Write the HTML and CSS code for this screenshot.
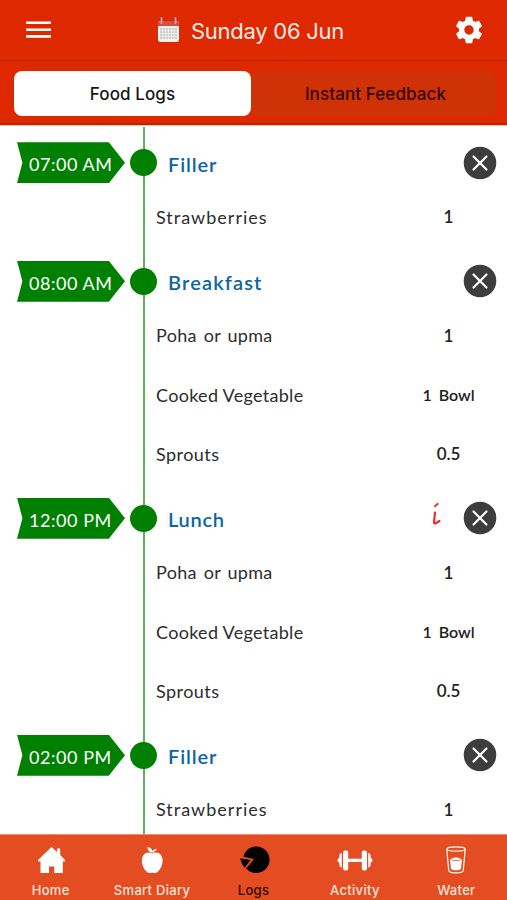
FILE: index.html
```html
<!DOCTYPE html>
<html lang="en">
<head>
    <meta charset="UTF-8">
    <meta name="viewport" content="width=device-width, initial-scale=1.0">
    <title>Food Logs</title>
    <link rel="stylesheet" href="styles.css">
</head>
<body>
    <svg width="0" height="0" class="defs">
        <symbol id="close" viewBox="0 0 34 34">
            <circle cx="17" cy="17" r="16.3" fill="#3d3d3d"/>
            <path d="M10.500 10.500l13 13M23.500 10.500l-13 13" stroke="#fff" stroke-width="2.200" stroke-linecap="round"/>
        </symbol>
    </svg>

    <header class="topbar">
        <button class="icon-btn" aria-label="Menu">
            <svg width="26" height="18" viewBox="0 0 26 18"><path d="M0 1.700h25M0 8.700h25M0 15.400h25" stroke="#fff" stroke-width="2.600"/></svg>
        </button>
        <div class="date">
            <svg width="23" height="26" viewBox="0 0 23 26">
                <rect x="1" y="4" width="21" height="21" rx="2.500" fill="#f4f1ef"/>
                <path d="M1 9V6.500q0-2.500 2.500-2.500h16q2.500 0 2.500 2.500V9z" fill="#dd4a40"/>
                <path d="M3 11h17v11H3z" fill="#c9cdcd"/>
                <path d="M3 13.700h17M3 16.500h17M3 19.300h17M5.800 11v11M8.700 11v11M11.500 11v11M14.400 11v11M17.200 11v11" stroke="#f4f1ef" stroke-width="0.800"/>
                <path d="M4.500 1v5M18.500 1v5" stroke="#a9b5b8" stroke-width="1.800" stroke-linecap="round"/>
            </svg>
            <span>Sunday 06 Jun</span>
        </div>
        <button class="icon-btn" aria-label="Settings">
            <svg width="32" height="32" viewBox="0 0 24 24"><path fill="#fff" d="M19.430 12.980c.04-.32.07-.64.07-.98s-.03-.66-.07-.98l2.110-1.650c.19-.15.24-.42.12-.64l-2-3.460c-.12-.22-.39-.3-.61-.22l-2.490 1c-.52-.4-1.080-.73-1.690-.98l-.38-2.650C14.460 2.180 14.250 2 14 2h-4c-.25 0-.46.18-.49.42l-.38 2.650c-.61.25-1.170.59-1.690.98l-2.490-1c-.23-.09-.49 0-.61.22l-2 3.460c-.13.22-.07.49.12.64l2.110 1.650c-.04.32-.07.65-.07.98s.03.66.07.98l-2.110 1.650c-.19.15-.24.42-.12.64l2 3.460c.12.22.39.3.61.22l2.490-1c.52.4 1.080.73 1.690.98l.38 2.650c.03.24.24.42.49.42h4c.25 0 .46-.18.49-.42l.38-2.650c.61-.25 1.170-.59 1.690-.98l2.490 1c.23.09.49 0 .61-.22l2-3.460c.12-.22.07-.49-.12-.64l-2.110-1.650zM12 15.500c-1.930 0-3.500-1.570-3.500-3.500s1.570-3.500 3.500-3.500 3.500 1.570 3.500 3.500-1.570 3.500-3.500 3.500z"/></svg>
        </button>
    </header>

    <div class="tabs">
        <button class="tab active">Food Logs</button>
        <button class="tab">Instant Feedback</button>
    </div>

    <main class="log">
        <div class="meal">
            <div class="time">07:00 AM</div>
            <div class="dot"></div>
            <h2 class="filler">Filler</h2>
            <svg class="close"><use href="#close"/></svg>
        </div>
        <div class="item"><span class="strawberries">Strawberries</span><span class="qty">1</span></div>

        <div class="meal">
            <div class="time">08:00 AM</div>
            <div class="dot"></div>
            <h2 class="breakfast">Breakfast</h2>
            <svg class="close"><use href="#close"/></svg>
        </div>
        <div class="item"><span class="poha">Poha or upma</span><span class="qty">1</span></div>
        <div class="item"><span class="vegetable">Cooked Vegetable</span><span class="qty bowl">1 Bowl</span></div>
        <div class="item"><span class="sprouts">Sprouts</span><span class="qty">0.5</span></div>

        <div class="meal">
            <div class="time">12:00 PM</div>
            <div class="dot"></div>
            <h2 class="lunch">Lunch</h2>
            <svg class="info" width="12" height="24" viewBox="0 0 12 24" fill="none" stroke="#f12f28" stroke-linecap="round" stroke-linejoin="round"><path d="M4.800 4.300l3-2.500" stroke-width="1.800"/><path d="M5 10.500L4 20q0 1.900 1.700 1.300l3.800-2.300" stroke-width="2.200"/></svg>
            <svg class="close"><use href="#close"/></svg>
        </div>
        <div class="item"><span class="poha">Poha or upma</span><span class="qty">1</span></div>
        <div class="item"><span class="vegetable">Cooked Vegetable</span><span class="qty bowl">1 Bowl</span></div>
        <div class="item"><span class="sprouts">Sprouts</span><span class="qty">0.5</span></div>

        <div class="meal">
            <div class="time">02:00 PM</div>
            <div class="dot"></div>
            <h2 class="filler">Filler</h2>
            <svg class="close"><use href="#close"/></svg>
        </div>
        <div class="item"><span class="strawberries">Strawberries</span><span class="qty">1</span></div>
    </main>

    <nav class="bottom-nav">
        <a class="nav-item">
            <svg width="36" height="30" viewBox="0 0 36 30" fill="#fff"><path d="M18.500 2l5.500 5V3.500h3.200v6.400L32 15v1.500h-2.200V28h-8.600v-6.500H16V28H7.500v-11.500H5V15z"/></svg>
            <span>Home</span>
        </a>
        <a class="nav-item">
            <svg width="36" height="30" viewBox="0 0 36 30" fill="#fff"><path d="M18.500 8.500c3-1.700 6.200-1.200 8.300 1.200 3.300 4 1.800 12.500-2.600 16.600-2 2-3.800 2.200-6 1.300-2.200.9-4 .7-6-1.300-4.400-4.100-5.800-12.600-2.500-16.600 2.200-2.400 5.800-2.900 8.800-1.200z"/><path d="M18.500 7.800c-2.800-.3-5-2.400-5.200-5.700 3.300.1 5.300 2.200 5.200 5.700zM18.300 7c.5-1.800 1.700-2.600 4-3.200l.4 1.200c-1.600.4-2.500 1.200-3.100 2.700z"/></svg>
            <span>Smart Diary</span>
        </a>
        <a class="nav-item selected">
            <svg width="36" height="30" viewBox="0 0 36 30"><path d="M18 14L7.300 11.800A13.300 13.300 0 1 1 10.200 23.500z"/><path d="M4 13.200l10.500 1.900-5.700 7.600q-3.400-3.700-4.800-9.500z"/></svg>
            <span>Logs</span>
        </a>
        <a class="nav-item">
            <svg width="38" height="30" viewBox="0 0 38 30" fill="#fff"><rect x="7" y="5.500" width="5.200" height="20" rx="2"/><rect x="25.800" y="5.500" width="5.200" height="20" rx="2"/><path d="M12 13.700h14v3.300H12z"/><path d="M5.800 8v14.500C3 22.300 3.500 19 3.300 17.500 1.800 17 1.500 16 1.500 15.300s.3-1.700 1.800-2.200C3.500 11.500 3 8.300 5.800 8zM32.200 8v14.500c2.800-.2 2.300-3.500 2.500-5 1.500-.5 1.800-1.500 1.800-2.200s-.3-1.700-1.800-2.200c-.2-1.600.3-4.800-2.500-5.100z"/></svg>
            <span>Activity</span>
        </a>
        <a class="nav-item">
            <svg width="36" height="30" viewBox="0 0 36 30" fill="none" stroke="#fff"><ellipse cx="18" cy="4" rx="9.200" ry="2.200" stroke-width="1.200"/><path d="M8.800 4l1.900 21.500c.4 3.100 14.200 3.100 14.600 0L27.200 4" stroke-width="1.200"/><path d="M12.600 14.500c3-2 7.800-2 10.800 0l-.8 9.300c-1.500 1.400-7.700 1.400-9.200 0z" fill="#fff"/><path d="M12.600 14.500c3 1.400 7.800 1.400 10.800 0" stroke="#e44d22" stroke-width=".8"/></svg>
            <span>Water</span>
        </a>
    </nav>
</body>
</html>
```
FILE: styles.css
```css
* {
    box-sizing: border-box;
}
body {
    margin: 0;
    height: 900px;
    display: flex;
    flex-direction: column;
    overflow: hidden;
    background: #fff;
    font-family: Inter, sans-serif;
}
.defs {
    position: absolute;
}
button {
    border: none;
    background: none;
    padding: 0;
    font-family: inherit;
}
svg {
    display: block;
    flex: none;
}

/* header */
.topbar {
    height: 61px;
    flex: none;
    display: flex;
    align-items: center;
    justify-content: space-between;
    padding: 0 22px 0 26px;
    background: #de2900;
    border-bottom: 1px solid #bd2200;
}
.date {
    display: flex;
    align-items: center;
    gap: 11px;
    padding-right: 4px;
    color: #ffece6;
    font-size: 22px;
    letter-spacing: -0.25px;
}
.date span {
    padding-top: 1px;
}
.tabs {
    height: 64px;
    flex: none;
    display: flex;
    padding: 10px 11px 9px 14px;
    background: #de2900;
    border-bottom: 2px solid #c12200;
    box-shadow: 0 1px #ffc3b5;
}
.tab {
    flex: 1;
    height: 45px;
    padding: 1px 0 0 4px;
    border-radius: 8px;
    background: #d03207;
    color: #350800;
    font-size: 17px;
    font-weight: 500;
    letter-spacing: 0.1px;
}
.tab.active {
    flex: 0 0 237px;
    padding-left: 0;
    background: #fff;
    color: #161616;
}

/* timeline */
.log {
    flex: 1;
    min-height: 0;
    overflow: hidden;
    padding-top: 3px;
    background: linear-gradient(#5cb35c, #5cb35c) 143px 2px / 2px 100% no-repeat;
    font-family: "Chalkboard SE", "Comic Sans MS", Lato, sans-serif;
}
.meal,
.item {
    height: 59.25px;
    display: flex;
    align-items: center;
}
.meal {
    padding: 10px 10px 0 17px;
}
.time {
    width: 108px;
    height: 41px;
    padding: 2px 0 0 12px;
    background: #008000;
    clip-path: polygon(0 0, 85% 0, 100% 50%, 85% 100%, 0 100%, 5% 50%);
    color: #fff;
    font-size: 18px;
    line-height: 41px;
    letter-spacing: 0.55px;
    white-space: nowrap;
}
.dot {
    width: 27px;
    height: 27px;
    margin: 0 11px 0 5px;
    border-radius: 50%;
    background: #008000;
}
h2 {
    margin: 2px auto 0 0;
    color: #0b65a5;
    font-size: 20px;
    font-weight: 600;
}
.filler {
    letter-spacing: 0.9px;
}
.breakfast {
    letter-spacing: 1.15px;
}
.lunch {
    letter-spacing: 0.7px;
}
.close {
    width: 34px;
    height: 34px;
}
.info {
    margin: -8px 21px 0 0;
}
.item {
    padding: 0 9px 0 156px;
    justify-content: space-between;
    color: #2d2d2d;
    font-size: 18px;
    white-space: nowrap;
}
.strawberries {
    letter-spacing: 1px;
}
.poha {
    letter-spacing: 0.3px;
    word-spacing: 2px;
}
.vegetable {
    letter-spacing: 0.3px;
}
.sprouts {
    letter-spacing: 0.45px;
}
.qty {
    width: 100px;
    padding-left: 1px;
    text-align: center;
    font-weight: 600;
    font-size: 17px;
    color: #222;
}
.bowl {
    font-size: 16px;
    word-spacing: 3px;
}

/* bottom bar */
.bottom-nav {
    height: 66px;
    flex: none;
    display: flex;
    background: #e44d22;
    border-top: 1px solid #ee8c70;
}
.nav-item {
    flex: 1;
    display: flex;
    flex-direction: column;
    align-items: center;
    padding-top: 10px;
    gap: 7px;
    color: #ffe4da;
    font-size: 13px;
    font-weight: 500;
    line-height: 16px;
    letter-spacing: 0.3px;
}
.nav-item.selected {
    color: #2b0a00;
}
```
